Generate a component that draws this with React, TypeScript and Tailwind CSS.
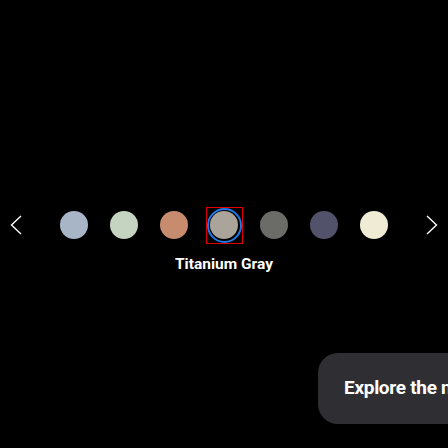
import React from "react";

const swatches = [
  { name: "Titanium Silverblue", color: "#a8b5c7" },
  { name: "Titanium Green", color: "#c4d4c1" },
  { name: "Titanium Copper", color: "#c78b6d" },
  { name: "Titanium Gray", color: "#aaa49a" },
  { name: "Titanium Black", color: "#6b6b68" },
  { name: "Titanium Violet", color: "#52526a" },
  { name: "Titanium Yellow", color: "#f0ebd5" },
];

function Chevron({ dir }: { dir: "left" | "right" }) {
  return (
    <svg width="12" height="20" viewBox="0 0 12 20" fill="none">
      <path
        d={dir === "left" ? "M11 1 L1.5 10 L11 19" : "M1 1 L10.5 10 L1 19"}
        stroke="white"
        strokeWidth="1.4"
      />
    </svg>
  );
}

export default function App() {
  const selected = 3;
  return (
    <div
      className="w-[448px] h-[448px] bg-black overflow-hidden text-white"
      style={{ fontFamily: 'Roboto, "Noto Sans", sans-serif' }}
    >
      <div className="flex items-center h-[38px] mt-[206px]">
        <button className="w-[49px] h-full flex items-center pl-[10px]">
          <Chevron dir="left" />
        </button>
        {swatches.map((s, i) => (
          <div key={s.name} className="w-[50px] h-full flex items-center justify-center">
            {i === selected ? (
              <div className="w-[37px] h-[37px] border border-[#e00000] flex items-center justify-center">
                <div className="w-[35px] h-[35px] rounded-full border-2 border-[#1f7ae6] flex items-center justify-center">
                  <div className="w-[28px] h-[28px] rounded-full" style={{ backgroundColor: s.color }} />
                </div>
              </div>
            ) : (
              <div className="w-[28px] h-[28px] rounded-full" style={{ backgroundColor: s.color }} />
            )}
          </div>
        ))}
        <button className="w-[49px] h-full flex items-center pl-[27px]">
          <Chevron dir="right" />
        </button>
      </div>
      <p className="mt-[10px] text-center text-[15.5px] leading-[20px] font-bold">
        {swatches[selected].name}
      </p>
      <div className="mt-[79px] pl-[318px] whitespace-nowrap">
        <div className="inline-flex items-center h-[71px] rounded-[20px] bg-[#2f2f33] px-[26px] text-[19px] font-bold tracking-[-0.3px]">
          Explore the new Galaxy
        </div>
      </div>
    </div>
  );
}
